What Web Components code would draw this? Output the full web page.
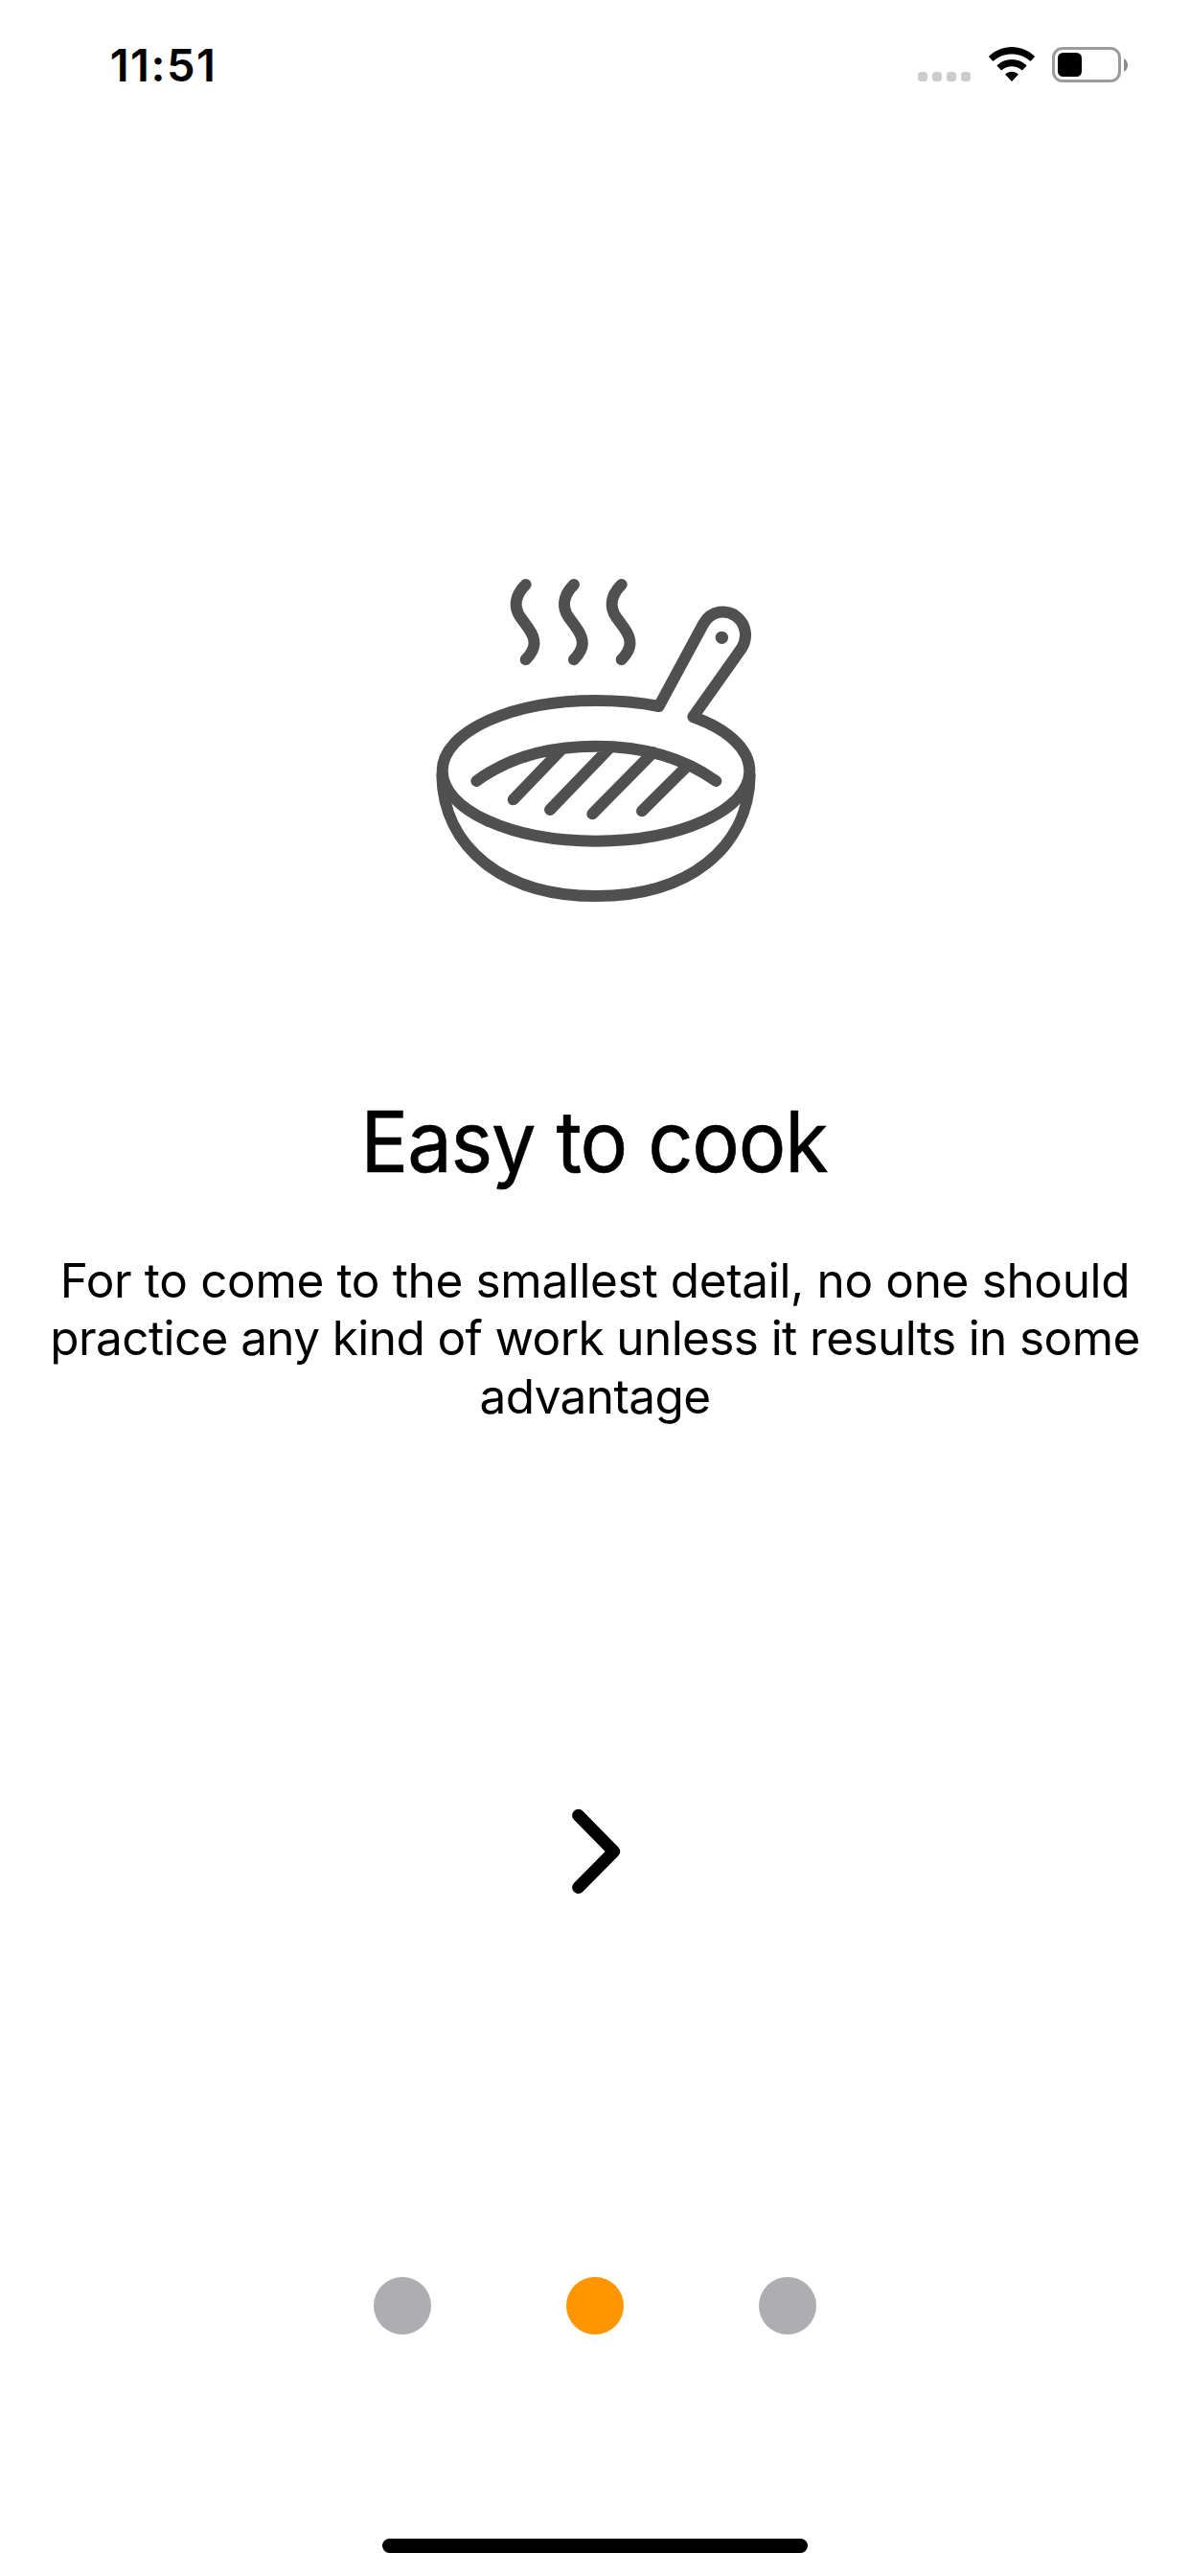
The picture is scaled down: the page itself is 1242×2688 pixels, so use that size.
<!DOCTYPE html>
<html lang="en"><head><meta charset="utf-8"><title>Easy to cook</title>
<style>body{margin:0;background:#fff;font-family:Inter,"Liberation Sans",sans-serif;color:#000}</style></head>
<body><onboarding-screen></onboarding-screen>
<script>
const define=(name,html)=>customElements.define(name,class extends HTMLElement{
  constructor(){super();this.attachShadow({mode:'open'}).innerHTML=html;}
});
define('cell-dots',`<style>:host{display:flex;gap:5px}i{width:10px;height:10px;border-radius:3.5px;background:#ccc}</style><i></i><i></i><i></i><i></i>`);
define('wifi-icon',`<style>:host,svg{display:block}</style>
<svg width="48" height="37" viewBox="0 0 48 37"><path d="M24 0C33 0 41.5 3.6 47.7 9.5Q48.2 10 47.7 10.5L44 14.5Q43.5 15 43 14.5C37.800 9.700 31.200 7.400 24 7.400S10.200 9.700 5 14.500Q4.500 15 4 14.500L.3 10.500Q-.2 10 .3 9.500C6.500 3.600 15 0 24 0Z"/><path d="M24 13C29.900 13 35.100 15.200 39.200 19Q39.700 19.500 39.200 20L35.300 24Q34.800 24.500 34.300 24C31.500 21.600 28 20.200 24 20.200S16.500 21.600 13.700 24Q13.200 24.500 12.700 24L8.800 20Q8.300 19.500 8.800 19C12.900 15.200 18.100 13 24 13Z"/><path d="M24 25.700C26.600 25.700 28.900 26.600 30.500 28.100Q31 28.600 30.500 29.100L24.500 35.500Q24 36 23.500 35.500L17.500 29.100Q17 28.600 17.500 28.100C19.100 26.600 21.400 25.700 24 25.700Z"/></svg>`);
define('battery-icon',`<style>:host{display:flex;align-items:center;gap:3px}.b{box-sizing:border-box;width:72px;height:37px;border:3px solid #9b9b9b;border-radius:11px;padding:3px}.f{width:25px;height:25px;border-radius:5.5px;background:#000}svg{display:block}</style>
<div class="b"><div class="f"></div></div><svg width="4" height="14" viewBox="0 0 4 14"><path d="M0 0C2.400 1.200 4 3.800 4 7S2.400 12.800 0 14Z" fill="#8c8c8c"/></svg>`);
define('status-bar',`<style>:host{display:flex;justify-content:space-between;align-items:flex-start;height:132px;padding:0 65px 0 114.7px;box-sizing:border-box}
time{font-size:47px;font-weight:600;line-height:56px;padding-top:40px;letter-spacing:1.5px}.r{display:flex;align-items:flex-end;padding-top:49px}wifi-icon{margin:0 18px 0 19px}cell-dots{padding-bottom:1px}</style>
<time>11:51</time><div class="r"><cell-dots></cell-dots><wifi-icon></wifi-icon><battery-icon></battery-icon></div>`);
define('pan-icon',`<style>:host,svg{display:block}</style>
<svg width="360" height="370" viewBox="0 0 1080 1110" fill="none" stroke="#505050" stroke-width="36" stroke-linecap="round" stroke-linejoin="round">
<path d="M323 60C285 98 287 135 307 163L331 196C356 231 358 260 323 295"/><path d="M474 60C436 98 438 135 458 163L482 196C507 231 509 260 474 295"/><path d="M623 60C585 98 587 135 607 163L631 196C656 231 658 260 623 295"/>
<path d="M740 441L880 182C904 140 953 135 985 162C1013 185 1019 226 1000 258L847 474C958 514 1024 576 1024 643C1024 765 809 863 543 863S62 765 62 643S277 423 543 423C613 423 680 429 740 441Z"/>
<path d="M61 655C64 885 255 1035 543 1035S1022 885 1025 655"/>
<path d="M169 675C270 600 400 566 543 566S815 600 919 675M284 733L434 577M399 765L588 569M532 778L722 585M687 769L826 631"/>
<circle cx="937" cy="226" r="20" fill="#505050" stroke="none"/></svg>`);
define('intro-slide',`<style>:host{display:flex;flex-direction:column;align-items:center}
h1{margin:178px 2px 0 0;font-size:88px;font-weight:400;line-height:106px;white-space:nowrap;letter-spacing:-1.2px;transform:scaleX(.94);-webkit-text-stroke:.6px #000}
p{margin:61.6px 0 0;font-size:49.5px;line-height:60.75px;text-align:center;white-space:nowrap;letter-spacing:-.6px}</style>
<slot name="icon"></slot><h1><slot name="title"></slot></h1><p><slot></slot></p>`);
define('next-button',`<style>:host,svg{display:block}</style><svg width="100" height="120" viewBox="0 0 100 120"><path d="M32.600 24.300L69.700 62L32.600 99.500" fill="none" stroke="#000" stroke-width="13" stroke-linecap="round" stroke-linejoin="round"/></svg>`);
define('page-dots',`<style>:host{display:flex;gap:141px}i{width:60px;height:60px;border-radius:50%;background:#aeaeb2}.on{background:#ff9500}</style><i></i><i class="on"></i><i></i>`);
define('home-indicator',`<style>:host{display:block;width:444px;height:15px;border-radius:8px;background:#000}</style>`);
define('onboarding-screen',`<style>:host{display:flex;flex-direction:column;align-items:center;width:1242px;height:2688px;overflow:hidden}
.lead{letter-spacing:-.35px}
status-bar{width:100%}intro-slide{margin-top:458px}next-button{margin-top:382.15px}page-dots{margin-top:386px}home-indicator{margin-top:213px}</style>
<status-bar></status-bar><intro-slide><pan-icon slot="icon"></pan-icon><span slot="title">Easy to cook</span><span class="lead">For to come to the smallest detail, no one should</span><br>practice any kind of work unless it results in some<br>advantage</intro-slide>
<next-button></next-button><page-dots></page-dots><home-indicator></home-indicator>`);
</script></body></html>
